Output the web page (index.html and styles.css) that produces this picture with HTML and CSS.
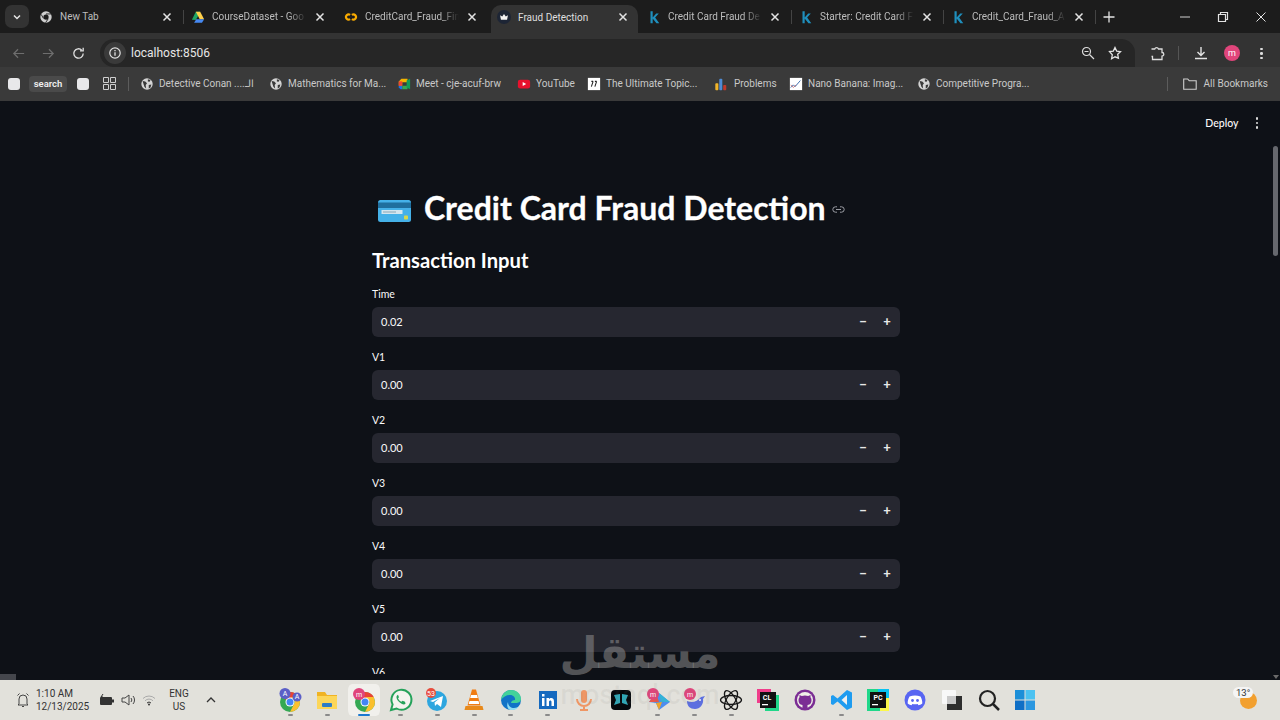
FILE: index.html
```html
<!DOCTYPE html>
<html lang="en">
<head>
<meta charset="utf-8">
<title>Fraud Detection</title>
<link rel="stylesheet" href="styles.css">
</head>
<body>
<svg class="defs" width="0" height="0" aria-hidden="true">
  <symbol id="globe" viewBox="0 0 16 16">
    <circle cx="8" cy="8" r="6.5" fill="#d5d5d5"/>
    <path d="M3 4.5l3 .5 2 2-1.5 2L7 13l-2-2-1-3zM9 2.5l3 1-1 2-2-.5zM10 9l3-.5-1 3.5-2 1z" fill="#3a3a3a"/>
  </symbol>
  <symbol id="x" viewBox="0 0 10 10">
    <path d="M1.5 1.5l7 7M8.5 1.5l-7 7" stroke="#e3e3e3" stroke-width="1.5" fill="none"/>
  </symbol>
  <symbol id="kag" viewBox="0 0 16 16">
    <path d="M4 1.5h2.500v7L10.500 4h3l-4.200 4.700L14 15h-3.200L6.500 9.700V15H4z" fill="#1f8fbd"/>
  </symbol>
</svg>

<header class="tabstrip">
  <div class="tabmenu"><svg width="10" height="10" viewBox="0 0 10 10"><path d="M2 3.5l3 3 3-3" fill="none" stroke="#e6e6e6" stroke-width="1.5"/></svg></div>
  <div class="tab">
    <svg class="favicon" viewBox="0 0 16 16"><circle cx="8" cy="8" r="6.5" fill="#cfcfcf"/><circle cx="8" cy="8" r="3" fill="#1c1c1c"/><path d="M8 4.500h6M5 9.500L2.500 5M10.500 10L7.500 14.500" stroke="#1c1c1c" stroke-width="1"/></svg>
    <span class="tabtitle">New Tab</span>
    <svg class="close"><use href="#x"/></svg>
  </div>
  <div class="tab">
    <svg class="favicon" viewBox="0 0 16 16"><path d="M5.500 2h5l-2.500 5-2.500 4.500L1 11z" fill="#1fa463"/><path d="M10.500 2L15 10.500h-5L5.500 2z" fill="#ffd04b"/><path d="M3.500 14.500L6 10.500h9l-2.500 4z" fill="#4688f1"/></svg>
    <span class="tabtitle tabfade">CourseDataset - Goo</span>
    <svg class="close"><use href="#x"/></svg>
  </div>
  <div class="tab">
    <svg class="favicon" viewBox="0 0 16 16"><path d="M7 5.500A3 3 0 1 0 7 10.500M9 10.500A3 3 0 1 0 9 5.500" fill="none" stroke="#f9ab00" stroke-width="2.500"/></svg>
    <span class="tabtitle tabfade">CreditCard_Fraud_Fin</span>
    <svg class="close"><use href="#x"/></svg>
  </div>
  <div class="tab tab-active">
    <svg class="favicon" viewBox="0 0 16 16"><circle cx="8" cy="8" r="8" fill="#1d2535"/><path d="M3.500 6l2.500 1.500L8 4.500l2 3L12.500 6l-1 5h-7z" fill="#f3f3f3"/></svg>
    <span class="tabtitle">Fraud Detection</span>
    <svg class="close"><use href="#x"/></svg>
  </div>
  <div class="tab">
    <svg class="favicon"><use href="#kag"/></svg>
    <span class="tabtitle tabfade">Credit Card Fraud De</span>
    <svg class="close"><use href="#x"/></svg>
  </div>
  <div class="tab">
    <svg class="favicon"><use href="#kag"/></svg>
    <span class="tabtitle tabfade">Starter: Credit Card F</span>
    <svg class="close"><use href="#x"/></svg>
  </div>
  <div class="tab">
    <svg class="favicon"><use href="#kag"/></svg>
    <span class="tabtitle tabfade">Credit_Card_Fraud_A</span>
    <svg class="close"><use href="#x"/></svg>
  </div>
  <svg class="newtab" width="12" height="12" viewBox="0 0 12 12"><path d="M6 .5v11M.5 6h11" stroke="#e3e3e3" stroke-width="1.300"/></svg>
  <div class="winctl">
    <svg width="12" height="12" viewBox="0 0 12 12"><path d="M1 6h10" stroke="#cfcfcf" stroke-width="1"/></svg>
    <svg width="12" height="12" viewBox="0 0 12 12"><path d="M1.500 3.500h7v7h-7zM3.500 3.500v-2h7v7h-2" fill="none" stroke="#e3e3e3" stroke-width="1.200"/></svg>
    <svg width="12" height="12" viewBox="0 0 12 12"><path d="M1.500 1.500l9 9M10.500 1.500l-9 9" stroke="#e3e3e3" stroke-width="1"/></svg>
  </div>
</header>

<nav class="toolbar">
  <svg class="navicon" viewBox="0 0 16 16"><path d="M14 8H3M7.500 3.500L3 8l4.500 4.500" fill="none" stroke="#6e6e6e" stroke-width="1.300"/></svg>
  <svg class="navicon" viewBox="0 0 16 16"><path d="M2 8h11M8.500 3.500L13 8l-4.500 4.500" fill="none" stroke="#6e6e6e" stroke-width="1.300"/></svg>
  <svg class="navicon" viewBox="0 0 16 16"><path d="M13 8a5 5 0 1 1-1.500-3.600M13 1.800v3.400H9.600" fill="none" stroke="#dedede" stroke-width="1.400"/></svg>
  <div class="omnibox">
    <span class="siteinfo"><svg width="14" height="14" viewBox="0 0 14 14"><circle cx="7" cy="7" r="5.200" fill="none" stroke="#e3e3e3" stroke-width="1.200"/><path d="M7 6.300v3.500M7 4v1.300" stroke="#e3e3e3" stroke-width="1.300"/></svg></span>
    <span class="url">localhost:8506</span>
    <svg class="omni-right" width="14" height="14" viewBox="0 0 14 14"><circle cx="5.500" cy="5.500" r="4" fill="none" stroke="#dedede" stroke-width="1.200"/><path d="M8.500 8.500l4.500 4.500M3.500 5.500h4" stroke="#dedede" stroke-width="1.200"/></svg>
    <svg class="omni-star" width="14" height="14" viewBox="0 0 14 14"><path d="M7 1.500l1.700 3.600 3.800.5-2.800 2.700.7 3.900L7 10.800l-3.400 1.900.7-3.900L1.500 5.600l3.800-.5z" fill="none" stroke="#e3e3e3" stroke-width="1.300"/></svg>
  </div>
  <svg class="ext" width="16" height="16" viewBox="0 0 16 16"><path d="M2.500 4h3.200a2 2 0 0 1 3.800 0h3.500v3.500a1.800 1.800 0 0 1 0 3.600V14.500H3.500v-3H2.500" fill="none" stroke="#dedede" stroke-width="1.300"/></svg>
  <span class="tooldiv"></span>
  <svg class="dl" width="14" height="14" viewBox="0 0 14 14"><path d="M7 1v8M3.500 6L7 9.500 10.500 6M1 12.500h12" fill="none" stroke="#e3e3e3" stroke-width="1.400"/></svg>
  <span class="avatar">m</span>
  <span class="dots"><i></i><i></i><i></i></span>
</nav>

<nav class="bookmarks">
  <div class="bm-lead">
    <span class="whitesq"></span>
    <span class="pill">search</span>
    <span class="whitesq"></span>
    <svg width="13" height="13" viewBox="0 0 13 13"><path d="M.5.5h5v5h-5zM7.500.5h5v5h-5zM.5 7.500h5v5h-5zM7.500 7.500h5v5h-5z" fill="none" stroke="#cfcfcf"/></svg>
    <span class="bardiv"></span>
  </div>
  <div class="bm-items">
    <a class="bm"><svg class="bmi"><use href="#globe"/></svg><span>Detective Conan ....الـ</span></a>
    <a class="bm"><svg class="bmi"><use href="#globe"/></svg><span>Mathematics for Ma...</span></a>
    <a class="bm"><svg class="bmi" viewBox="0 0 16 16"><path d="M2 5l3-3h7v4H6v4H2z" fill="#f4b400"/><path d="M2 10h4v4H4l-2-2z" fill="#1a73e8"/><path d="M6 10h6v4H6z" fill="#34a853"/><path d="M2 5h4v5H2z" fill="#ea4335"/><path d="M11 4l4-2v12l-4-2z" fill="#0f9d58"/></svg><span>Meet - cje-acuf-brw</span></a>
    <a class="bm"><svg class="bmi" viewBox="0 0 16 16"><rect x="1" y="3" width="14" height="10" rx="2.500" fill="#e8112d"/><path d="M6.500 5.700v4.600L10.500 8z" fill="#fff"/></svg><span>YouTube</span></a>
    <a class="bm"><svg class="bmi" viewBox="0 0 16 16"><rect x="1" y="1" width="14" height="14" fill="#fff"/><path d="M5 11l2-6M7 5H5M9 11l2-6M11 5H9" stroke="#222" stroke-width="1.200"/></svg><span>The Ultimate Topic...</span></a>
    <a class="bm"><svg class="bmi bmi-wide" viewBox="0 0 16 16"><rect x="1.500" y="7" width="3.500" height="8" rx="1" fill="#f0b429"/><rect x="6" y="2" width="3.500" height="13" rx="1" fill="#4f8bd4"/><rect x="10.500" y="9" width="3.500" height="6" rx="1" fill="#c0392b"/></svg><span>Problems</span></a>
    <a class="bm"><svg class="bmi" viewBox="0 0 16 16"><rect x="1" y="1" width="14" height="14" fill="#fff"/><path d="M2 12l3-3 2 2 6-7" fill="none" stroke="#3d6fb0" stroke-width="1.100"/><path d="M2 9l3 3 3-3" fill="none" stroke="#c0504d" stroke-width=".8"/></svg><span>Nano Banana: Imag...</span></a>
    <a class="bm"><svg class="bmi"><use href="#globe"/></svg><span>Competitive Progra...</span></a>
  </div>
  <div class="bm-all">
    <span class="bardiv"></span>
    <svg width="14" height="12" viewBox="0 0 14 12"><path d="M.7 1h4l1.500 1.700h7v8.600H.7z" fill="none" stroke="#cfcfcf" stroke-width="1.100"/></svg>
    <span>All Bookmarks</span>
  </div>
</nav>

<main class="page">
  <div class="appbar">
    <span class="deploy">Deploy</span>
    <span class="dots dots-small"><i></i><i></i><i></i></span>
  </div>
  <div class="block">
    <h1 class="title">
      <svg class="cardemoji" viewBox="0 0 33 22"><rect width="33" height="22" rx="2.500" fill="#45b1e8"/><rect y="2.500" width="33" height="5.500" fill="#1f6f9e"/><rect x="3.500" y="10" width="21" height="4" fill="#d4e6ef"/><rect x="5" y="11.500" width="13" height="1" fill="#8aa5b5"/><rect x="26" y="15.500" width="4" height="4" rx=".8" fill="#d9d84a"/></svg>
      <span>Credit Card Fraud Detection</span>
      <svg class="anchor" width="13" height="13" viewBox="0 0 13 13"><path d="M5 3.800H3.500a2.700 2.700 0 0 0 0 5.400H5M8 3.800h1.500a2.700 2.700 0 0 1 0 5.400H8M4 6.500h5" fill="none" stroke="#9a9ca3" stroke-width="1"/></svg>
    </h1>
    <h2 class="subtitle">Transaction Input</h2>
    <div class="field"><label>Time</label><div class="numinput"><span class="val">0.02</span><span class="step">−</span><span class="step">+</span></div></div>
    <div class="field"><label>V1</label><div class="numinput"><span class="val">0.00</span><span class="step">−</span><span class="step">+</span></div></div>
    <div class="field"><label>V2</label><div class="numinput"><span class="val">0.00</span><span class="step">−</span><span class="step">+</span></div></div>
    <div class="field"><label>V3</label><div class="numinput"><span class="val">0.00</span><span class="step">−</span><span class="step">+</span></div></div>
    <div class="field"><label>V4</label><div class="numinput"><span class="val">0.00</span><span class="step">−</span><span class="step">+</span></div></div>
    <div class="field"><label>V5</label><div class="numinput"><span class="val">0.00</span><span class="step">−</span><span class="step">+</span></div></div>
    <div class="field"><label>V6</label></div>
  </div>
  <div class="vscroll"><span class="vthumb"></span></div>
  <div class="hscroll"><span class="hthumb"></span><span class="harrow"></span></div>
</main>

<footer class="taskbar">
  <div class="tray-left">
    <svg width="16" height="16" viewBox="0 0 16 16"><path d="M4 12V7a4 4 0 0 1 8 0v5l1 1H3zM7 14.500h2M2.500 3.500l2-2M13.500 3.500l-2-2" fill="none" stroke="#444" stroke-width="1"/></svg>
    <div class="clock"><span>1:10 AM</span><span>12/13/2025</span></div>
    <svg class="t-batt" width="16" height="12" viewBox="0 0 16 12"><rect x="1" y="3" width="12" height="8" rx="1" fill="#333"/><rect x="13" y="5.500" width="2" height="3" fill="#333"/><path d="M4 0l-2 3h2l-1 2" stroke="#333" fill="none"/></svg>
    <svg class="t-vol" width="16" height="14" viewBox="0 0 16 14"><path d="M1 5h3l4-3v10L4 9H1zM10 5a3 3 0 0 1 0 4M12 3a6 6 0 0 1 0 8" fill="none" stroke="#444" stroke-width="1"/></svg>
    <svg width="14" height="12" viewBox="0 0 14 12"><path d="M1 4.500a8.500 8.500 0 0 1 12 0M3 6.800a5.500 5.500 0 0 1 8 0" fill="none" stroke="#aaa" stroke-width="1"/><path d="M5 9a2.800 2.800 0 0 1 4 0" fill="none" stroke="#333" stroke-width="1"/><circle cx="7" cy="10.500" r="1" fill="#333"/></svg>
    <div class="lang"><span>ENG</span><span>US</span></div>
    <svg width="10" height="8" viewBox="0 0 10 8"><path d="M1 6l4-4 4 4" fill="none" stroke="#333" stroke-width="1.300"/></svg>
  </div>
  <div class="apps">
    <span class="app pin">
      <svg viewBox="0 0 24 24"><circle cx="12" cy="14" r="10" fill="#34a853"/><path d="M12 14L3.300 9a10 10 0 0 1 17.400 0z" fill="#ea4335"/><path d="M22 14a10 10 0 0 1-10 10l5-10-4-5h7.700z" fill="#fbc02d"/><circle cx="12" cy="14" r="4.500" fill="#fff"/><circle cx="12" cy="14" r="3.500" fill="#4285f4"/><circle cx="7" cy="5.500" r="5.500" fill="#5b5fc7"/><circle cx="19" cy="9" r="4.500" fill="#5b5fc7"/><text x="7" y="8" class="svgt">A</text><text x="19" y="11" class="svgt">A</text></svg>
    </span>
    <span class="app pin">
      <svg viewBox="0 0 24 24"><path d="M2 4h8l2 3h10v14H2z" fill="#f0b323"/><path d="M2 8h20v13H2z" fill="#fcd659"/><rect x="7" y="15" width="10" height="4" rx="1" fill="#2d7cc7"/></svg>
    </span>
    <span class="app app-active">
      <svg viewBox="0 0 24 24"><circle cx="13" cy="14" r="10" fill="#34a853"/><path d="M13 14L4.300 9a10 10 0 0 1 17.400 0z" fill="#ea4335"/><path d="M23 14a10 10 0 0 1-10 10l5-10-4-5h7.700z" fill="#fbc02d"/><circle cx="13" cy="14" r="4.500" fill="#fff"/><circle cx="13" cy="14" r="3.500" fill="#4285f4"/><circle cx="7" cy="6" r="6" fill="#e0457b"/><text x="7" y="8.500" class="svgt">m</text></svg>
    </span>
    <span class="app pin">
      <svg viewBox="0 0 24 24"><path d="M2 22l1.600-5.600A10 10 0 1 1 7.600 20.500z" fill="#f4f4ef" stroke="#25a25a" stroke-width="2"/><path d="M8 7.500c-1.500 2 .5 5 2.500 6.800s4.500 3 6 1.500l-.5-2-2.500-1-1 1c-1.500-.5-3-2-3.500-3.500l1-1-1-2.500z" fill="#25a25a"/></svg>
    </span>
    <span class="app pin">
      <svg viewBox="0 0 24 24"><circle cx="12" cy="13" r="10" fill="#2ea6df"/><path d="M5 13l13-5-2 11-4-3-2 2-.5-3.500 5.500-4.500-7 4z" fill="#fff"/><circle cx="6" cy="5" r="5" fill="#e74c3c"/><text x="6" y="7.500" class="svgt">53</text></svg>
    </span>
    <span class="app pin">
      <svg viewBox="0 0 24 24"><path d="M10 1.500h4l4.500 16h-13z" fill="#f07c12"/><path d="M9 7h6l.8 3H8.200zM7.500 13h9l.8 3H6.700z" fill="#fff"/><path d="M3.500 18h17l1 4h-19z" fill="#e8891a"/></svg>
    </span>
    <span class="app pin">
      <svg viewBox="0 0 24 24"><circle cx="12" cy="12" r="10" fill="#1173c7"/><path d="M2 12C3 5 8 2 12 2c6 0 10 4 10 9 0 3-3 4-5 4h-5c0-2 2-3 4-3 .5-3-2-5-5-5-4 0-7 2-9 5z" fill="#43d29a"/><path d="M9 14c0 4 3 6 6 6 2 0 4-1 5-2-2 4-5 4-8 4-3 0-5-4-3-8z" fill="#8fdcf2"/></svg>
    </span>
    <span class="app pin">
      <svg viewBox="0 0 24 24"><rect x="3" y="3" width="18" height="18" fill="#1569bf"/><path d="M6 10h2.500v8H6zM6 6h2.500v2.500H6zM10.500 10H13v1.200c1-1.600 5-2 5 2V18h-2.500v-4c0-2-2.500-2-2.500 0v4h-2.500z" fill="#fff"/></svg>
    </span>
    <span class="app">
      <svg viewBox="0 0 24 24"><rect x="9" y="2" width="6" height="13" rx="3" fill="#ef9664"/><path d="M5 11a7 7 0 0 0 14 0M12 18v4M8 22h8" fill="none" stroke="#ef9664" stroke-width="2"/></svg>
    </span>
    <span class="app">
      <svg viewBox="0 0 24 24"><rect x="2" y="2" width="20" height="20" rx="4" fill="#06090d"/><path d="M11 6L5 7l2 5-2 5 6-2zM13 6l6 1-2 5 2 5-6-2z" fill="#2fa8b8"/></svg>
    </span>
    <span class="app pin">
      <svg viewBox="0 0 24 24"><path d="M11 5l2 0 11 9-11 8-3-7-7-1z" fill="#4c8df0"/><path d="M13 5l11 9-9 0z" fill="#35b3d6"/><path d="M10 15l6-1-3 8z" fill="#f0a629"/><path d="M3 14l7-9 3 9z" fill="#e9564c"/><circle cx="7" cy="6" r="6" fill="#e0457b"/><text x="7" y="8.500" class="svgt">m</text></svg>
    </span>
    <span class="app pin">
      <svg viewBox="0 0 24 24"><path d="M4 13c5 2 10 1 14-4l4-1-2 3c1 5-3 10-8 10S4 18 4 13z" fill="#5c6fe0"/><circle cx="17" cy="12" r="1" fill="#fff"/><circle cx="7" cy="6" r="6" fill="#e0457b"/><text x="7" y="8.500" class="svgt">m</text></svg>
    </span>
    <span class="app pin">
      <svg viewBox="0 0 24 24" fill="none" stroke="#161616" stroke-width="1.300"><ellipse cx="12" cy="12" rx="10.500" ry="4.500"/><ellipse cx="12" cy="12" rx="10.500" ry="4.500" transform="rotate(60 12 12)"/><ellipse cx="12" cy="12" rx="10.500" ry="4.500" transform="rotate(120 12 12)"/></svg>
    </span>
    <span class="app">
      <svg viewBox="0 0 24 24"><rect x="1" y="1" width="14" height="14" fill="#f03d8b"/><rect x="9" y="7" width="14" height="16" fill="#21d789"/><rect x="4" y="4" width="16" height="16" fill="#111"/><text x="11" y="12" class="svgt svgt-w">CL</text><rect x="6" y="16" width="6" height="1.300" fill="#fff"/></svg>
    </span>
    <span class="app">
      <svg viewBox="0 0 24 24"><circle cx="12" cy="12" r="10.500" fill="#7b2d94"/><circle cx="12" cy="12" r="8" fill="#f0eee8"/><path d="M9.500 20v-3c-3-.5-4-2-4-5 0-1 .3-2 1-2.800V7l2.300 1a9 9 0 0 1 6.400 0L17.500 7v2.200c.7.800 1 1.800 1 2.800 0 3-1 4.500-4 5v3z" fill="#7b2d94"/></svg>
    </span>
    <span class="app pin">
      <svg viewBox="0 0 24 24"><path d="M17 2l5 2.500v15L17 22 7.500 13.500 3 17l-2-1V8l2-1 4.500 3.500z" fill="#1f9cf0"/><path d="M17 7l-5.500 5 5.500 5z" fill="#f0f0f0"/></svg>
    </span>
    <span class="app">
      <svg viewBox="0 0 24 24"><rect x="1" y="1" width="15" height="12" fill="#21d789"/><rect x="12" y="1" width="11" height="12" fill="#07c3f2"/><rect x="1" y="10" width="14" height="13" fill="#21d789"/><rect x="14" y="10" width="9" height="13" fill="#fcf84a"/><rect x="4" y="4" width="16" height="16" fill="#111"/><text x="12" y="12" class="svgt svgt-w">PC</text><rect x="6" y="16" width="6" height="1.300" fill="#fff"/></svg>
    </span>
    <span class="app">
      <svg viewBox="0 0 24 24"><circle cx="12" cy="12" r="10.500" fill="#5865f2"/><path d="M6.500 8.500C10 7 14 7 17.500 8.500c1.300 2.300 1.900 4.600 1.800 7-1.400 1-2.800 1.500-3.800 1.700l-.9-1.300c-1.700.5-3.500.5-5.200 0l-.9 1.300c-1-.2-2.400-.7-3.800-1.700-.1-2.400.5-4.700 1.800-7z" fill="#fff"/><circle cx="9.500" cy="12.500" r="1.400" fill="#5865f2"/><circle cx="14.500" cy="12.500" r="1.400" fill="#5865f2"/></svg>
    </span>
    <span class="app">
      <svg viewBox="0 0 24 24"><rect x="2" y="2" width="14" height="14" rx="1" fill="#f8f8f8"/><rect x="7" y="8" width="15" height="14" fill="#2e2e2e"/><rect x="7" y="8" width="9" height="8" fill="#c9c9c9"/></svg>
    </span>
    <span class="app">
      <svg viewBox="0 0 24 24"><circle cx="10.500" cy="10.500" r="7.500" fill="none" stroke="#222" stroke-width="2.200"/><path d="M16 16l6 6" stroke="#222" stroke-width="2.500"/></svg>
    </span>
    <span class="app">
      <svg viewBox="0 0 24 24"><rect x="2" y="2" width="9.500" height="9.500" fill="#1c8fd8"/><rect x="12.500" y="2" width="9.500" height="9.500" fill="#4cc2f1"/><rect x="2" y="12.500" width="9.500" height="9.500" fill="#0f6fc6"/><rect x="12.500" y="12.500" width="9.500" height="9.500" fill="#2b97e0"/></svg>
    </span>
  </div>
  <div class="weather">
    <span class="sun"></span>
    <span class="temp">13°</span>
  </div>
</footer>

<div class="wm" aria-hidden="true">مستقل</div>
<div class="wm-latin" aria-hidden="true">mostaql.com</div>
</body>
</html>
```
FILE: styles.css
```css
* { box-sizing: border-box; }
html, body { margin: 0; height: 100%; }
body {
  width: 1280px;
  height: 720px;
  overflow: hidden;
  display: flex;
  flex-direction: column;
  position: relative;
  background: #0e1117;
  font-family: Roboto, "Noto Sans", sans-serif;
  color: #fff;
}
.defs { position: absolute; }

/* tab strip */
.tabstrip {
  height: 33px;
  flex: none;
  background: #1c1c1c;
  display: flex;
  align-items: stretch;
  padding-left: 5px;
}
.tabmenu {
  width: 24px;
  height: 23px;
  margin: 5px 3px 0 0;
  background: #333;
  border-radius: 7px;
  display: flex;
  align-items: center;
  justify-content: center;
}
.tab {
  width: 152px;
  display: flex;
  align-items: center;
  padding: 0 10px 0 7px;
  position: relative;
  color: #bdbdbd;
  font-size: 10px;
}
.tab::after {
  content: "";
  position: absolute;
  right: 0;
  top: 10px;
  height: 14px;
  width: 1px;
  background: #444;
}
.tab:nth-child(3)::after, .tab:nth-child(4)::after, .tab:nth-child(5)::after { display: none; }
.tab:nth-child(3) { width: 153px; }
.tab-active {
  background: #333;
  color: #dfdfdf;
  margin-top: 5px;
  border-radius: 10px 10px 0 0;
  padding-bottom: 4px;
  padding-left: 6px;
  width: 147px;
  margin-left: 2px;
  margin-right: 2px;
}
.tab-active .close { margin-right: 0; }
.favicon { width: 14px; height: 14px; flex: none; margin-right: 7px; }
.tabtitle { flex: 1; min-width: 0; white-space: nowrap; margin-right: 8px; }
.tabfade { -webkit-mask-image: linear-gradient(90deg, #000 80%, transparent 100%); mask-image: linear-gradient(90deg, #000 80%, transparent 100%); }
.close { width: 10px; height: 10px; flex: none; margin-right: 2px; }
.newtab { align-self: center; margin-left: 7px; }
.winctl {
  margin-left: auto;
  width: 120px;
  margin-right: 13px;
  display: flex;
  align-items: center;
  justify-content: space-between;
  padding-left: 32px;
}

/* toolbar */
.toolbar {
  height: 34px;
  flex: none;
  background: #333;
  display: flex;
  align-items: flex-end;
  padding-left: 11px;
}
.navicon { width: 15px; height: 15px; margin: 0 15px 6px 0; flex: none; }
.navicon:nth-of-type(3) { margin-right: 14px; }
.omnibox {
  width: 1035px;
  height: 28px;
  background: #262626;
  border-radius: 14px 14px 0 14px;
  display: flex;
  align-items: center;
  padding-left: 4px;
}
.siteinfo {
  width: 22px;
  height: 22px;
  border-radius: 50%;
  background: #3a3a3a;
  display: flex;
  align-items: center;
  justify-content: center;
}
.url { font-size: 12px; color: #e6e6e6; margin-left: 5px; flex: 1; }
.omni-right { margin-right: 13px; }
.omni-star { margin-right: 13px; }
.ext { margin: 0 0 6px 14px; }
.tooldiv { width: 1px; height: 14px; background: #555; margin: 0 0 7px 13px; }
.dl { margin: 0 0 7px 15px; }
.avatar {
  width: 16px;
  height: 16px;
  border-radius: 50%;
  background: #e0457b;
  font-size: 9px;
  line-height: 16px;
  text-align: center;
  margin: 0 0 6px 16px;
}
.dots { display: flex; flex-direction: column; gap: 2px; margin: 0 0 8px 20px; }
.dots i { width: 2.5px; height: 2.5px; background: #ddd; border-radius: 50%; display: block; }

/* bookmarks */
.bookmarks {
  height: 34px;
  flex: none;
  background: #3a3a3a;
  display: flex;
  align-items: center;
  font-size: 10px;
  color: #c9c9c9;
  padding: 0 0 1px 8px;
}
.bm-lead { display: flex; align-items: center; width: 132px; }
.whitesq { width: 12px; height: 12px; background: #e8e8ea; border-radius: 3px; }
.pill {
  background: #4a4a4a;
  color: #eee;
  font-size: 9.5px;
  font-weight: 600;
  height: 16px;
  line-height: 16px;
  border-radius: 4px;
  width: 38px;
  margin: 0 10px 0 9px;
  text-align: center;
}
.bm-lead svg { margin-left: 14px; }
.bm-lead .bardiv { margin-left: 12px; }
.bardiv { width: 1px; height: 14px; background: #5c5c5c; display: block; }
.bm-items {
  display: grid;
  grid-template-columns: 129px 128px 120px 70px 127px 75px 128px 120px;
}
.bm { display: flex; align-items: center; gap: 5px; white-space: nowrap; }
.bmi { width: 14px; height: 14px; flex: none; }
.bmi-wide { margin-right: 1px; }
.bm-all {
  margin-left: auto;
  margin-right: 12px;
  display: flex;
  align-items: center;
}
.bm-all svg { margin: 0 7px 0 15px; }

/* page */
.page {
  flex: 1;
  min-height: 0;
  position: relative;
  overflow: hidden;
  background: #0e1117;
  padding-right: 8px;
  font-family: Lato, "Noto Sans", sans-serif;
}
.appbar {
  position: absolute;
  top: 16px;
  right: 22px;
  display: flex;
  align-items: center;
  font-size: 10.5px;
  font-weight: 500;
  color: #fafafa;
}
.dots-small { margin: 0 0 0 17px; }
.block { width: 528px; margin: 0 auto; padding-top: 82px; }
.title {
  margin: 0 0 0 6px;
  display: flex;
  align-items: center;
  height: 48px;
  font-size: 32px;
  font-weight: 700;
  white-space: nowrap;
  -webkit-text-stroke: 0.3px #fff;
}
.cardemoji { width: 33px; height: 22px; margin: 8px 13px 0 0; flex: none; }
.anchor { margin: 4px 0 0 6px; }
.subtitle {
  margin: 15px 0 0;
  font-size: 20.2px;
  font-weight: 700;
  line-height: 28px;
}
.field { margin-top: 15px; height: 48px; }
.subtitle + .field { margin-top: 13px; }
.field label { display: block; font-size: 10.5px; line-height: 14px; height: 20px; color: #fafafa; }
.numinput {
  height: 30px;
  background: #262730;
  border-radius: 6px;
  display: flex;
  align-items: center;
  padding: 0 1px 2px 9px;
  font-size: 11px;
}
.val { flex: 1; color: #fafafa; }
.step { width: 24px; text-align: center; font-size: 13px; font-weight: 900; color: #e8e8e8; }
.vscroll { position: absolute; right: 0; top: 0; bottom: 6px; width: 8px; background: #0e1117; }
.vthumb { position: absolute; top: 45px; left: 1px; width: 5px; height: 110px; background: #66686e; border-radius: 3px; }
.hscroll { position: absolute; left: 0; right: 0; bottom: 0; height: 6px; background: #0e1117; }
.hthumb { position: absolute; left: 0; top: 0; width: 16px; height: 6px; background: #44464c; }
.harrow { position: absolute; right: 1px; top: 1px; border: 3px solid transparent; border-top: 4px solid #6a6a6a; border-bottom: 0; }

/* taskbar */
.taskbar {
  height: 40px;
  flex: none;
  background: #e2e1db;
  display: flex;
  align-items: center;
  color: #333;
  font-size: 10px;
  position: relative;
}
.tray-left { display: flex; align-items: center; padding-left: 15px; width: 272px; flex: none; }
.clock { display: flex; flex-direction: column; margin: 0 0 0 5px; line-height: 13px; width: 63px; }
.t-batt { margin-right: 6px; }
.t-vol { margin-right: 5px; }
.lang { display: flex; flex-direction: column; align-items: center; line-height: 13px; margin: 0 16px 0 12px; width: 22px; }
.apps { display: flex; }
.app {
  width: 36.75px;
  height: 32px;
  display: flex;
  align-items: center;
  justify-content: center;
  position: relative;
}
.app svg { width: 24px; height: 24px; overflow: visible; }
.pin::after {
  content: "";
  position: absolute;
  bottom: 0;
  left: 50%;
  margin-left: -2.5px;
  width: 5px;
  height: 2px;
  border-radius: 1px;
  background: #8a8a8a;
}
.app-active { background: #f1f0ec; border-radius: 6px; border: solid transparent; border-width: 0 2px; background-clip: padding-box; }
.app-active::after {
  content: "";
  position: absolute;
  bottom: 0;
  left: 50%;
  margin-left: -6px;
  width: 12px;
  height: 2.5px;
  border-radius: 1px;
  background: #1a78d0;
}
.svgt { font-family: Roboto, sans-serif; font-size: 7px; fill: #fff; text-anchor: middle; }
.svgt-w { font-weight: 700; }
.weather { position: absolute; left: 1236px; top: 4px; width: 30px; height: 32px; }
.sun { position: absolute; left: 4px; top: 8px; width: 17px; height: 17px; border-radius: 50%; background: #f2a02f; }
.temp {
  position: absolute;
  left: -3px;
  top: 3px;
  background: #f5f5f5;
  border-radius: 8px;
  font-size: 9.5px;
  line-height: 11px;
  padding: 0 3px;
}

/* watermark */
.wm {
  position: absolute;
  left: 540px;
  top: 626px;
  width: 200px;
  text-align: center;
  font-family: "DejaVu Sans", sans-serif;
  font-weight: 700;
  font-size: 44px;
  line-height: 54px;
  color: rgba(150, 150, 150, 0.5);
  white-space: nowrap;
}
.wm-latin {
  position: absolute;
  left: 540px;
  top: 680px;
  width: 200px;
  text-align: center;
  font-size: 27px;
  font-weight: 500;
  line-height: 30px;
  color: rgba(120, 120, 120, 0.09);
}
```
